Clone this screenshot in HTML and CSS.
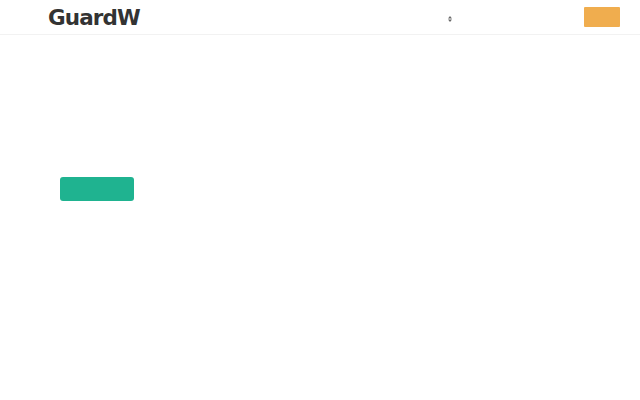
FILE: index.html
```html
<!DOCTYPE html>
<html lang="en">
<head>
<meta charset="utf-8">
<title>GuardW</title>
<link rel="stylesheet" href="styles.css">
</head>
<body>
<header class="site-header">
  <div class="header-inner">
    <div class="logo">GuardW</div>
    <div class="header-right">
      <span class="lang-select" aria-label="language">
        <svg class="select-arrows" width="4" height="6" viewBox="0 0 4 6"><path d="M0 2.5 L2 0 L4 2.5 Z M0 3.5 L2 6 L4 3.5 Z" fill="#666"/></svg>
      </span>
      <a class="cta-btn" href="#"></a>
    </div>
  </div>
</header>
<main class="hero">
  <div class="hero-inner">
    <a class="primary-btn" href="#"></a>
  </div>
</main>
</body>
</html>
```

FILE: styles.css
```css
html, body {
  margin: 0;
  padding: 0;
  background: #ffffff;
  font-family: "DejaVu Sans", sans-serif;
}
.site-header {
  height: 34px;
  border-bottom: 1px solid #f2f2f2;
  box-sizing: content-box;
}
.header-inner {
  display: flex;
  align-items: center;
  justify-content: space-between;
  height: 34px;
  padding: 0 20px 0 48px;
}
.logo {
  font-weight: bold;
  font-size: 21.5px;
  color: #333333;
  letter-spacing: -0.9px;
  line-height: 34px;
  padding-top: 1px;
}
.header-right {
  display: flex;
  align-items: center;
}
.lang-select {
  display: flex;
  margin-right: 132px;
  padding-top: 3px;
}
.cta-btn {
  display: block;
  width: 36px;
  height: 20px;
  background: #f0ad4e;
  border-radius: 1px;
}
.hero-inner {
  padding: 142px 0 0 60px;
}
.primary-btn {
  display: block;
  width: 74px;
  height: 24px;
  background: #1fb390;
  border-radius: 3px;
}
```
